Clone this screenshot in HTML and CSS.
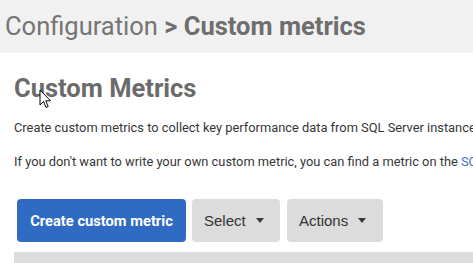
FILE: index.html
```html
<!DOCTYPE html>
<html lang="en">
<head>
  <meta charset="UTF-8" />
  <title>Custom metrics</title>
  <link rel="stylesheet" href="styles.css">
</head>
<body>
  <div class="page-header">
    Configuration <b>&gt; Custom metrics</b>
  </div>

  <div class="content">
    <h1>Custom Metrics</h1>
    <p>Create custom metrics to collect key performance data from SQL Server instances.</p>
    <p>If you don't want to write your own custom metric, you can find a metric on the <a href="#">SQL Monitor metrics website</a>.</p>

    <div class="toolbar">
      <button class="btn btn-primary">Create custom metric</button>
      <button class="btn btn-grey btn-select">Select <span class="caret"></span></button>
      <button class="btn btn-grey btn-actions">Actions <span class="caret"></span></button>
    </div>

    <div class="grid-head"></div>
  </div>

  <!-- mouse pointer seen in the screenshot -->
  <svg class="cursor" width="13" height="20" viewBox="0 0 13 20">
    <path d="M1 1 L1 16 L4.5 12.5 L7 18.5 L9.2 17.5 L6.8 11.8 L11.5 11.8 Z" fill="#fff" stroke="#000" stroke-width="1"/>
  </svg>
</body>
</html>
```

FILE: styles.css
```css
* {
  box-sizing: border-box;
  margin: 0;
  padding: 0;
}

body {
  font-family: Roboto, 'Liberation Sans', sans-serif;
  background: #fff;
  overflow: hidden;
  white-space: nowrap;
}

.page-header {
  height: 53px;
  background: #f1f1f1;
  padding: 10px 0 0 5px;
  font-size: 25.5px;
  line-height: 32px;
  color: #757575;
}

.page-header b {
  font-weight: bold;
  color: #6e6e6e;
}

.content {
  padding-left: 14px;
}

h1 {
  margin-top: 20px;
  font-size: 25.5px;
  line-height: 30px;
  font-weight: bold;
  color: #6b6b6b;
}

p {
  margin-top: 16px;
  font-size: 12.85px;
  line-height: 18px;
  color: #363636;
}

p a {
  color: #3f72c0;
  text-decoration: none;
}

.toolbar {
  display: flex;
  gap: 6px;
  margin: 28px 0 0 3px;
}

.btn {
  height: 43px;
  border: none;
  border-radius: 4px;
  font-size: 15px;
  cursor: pointer;
  display: flex;
  align-items: center;
}

.btn-primary {
  width: 169px;
  justify-content: center;
  background: #2f6bc3;
  color: #fff;
  font-family: Roboto, sans-serif;
  font-size: 14.7px;
  font-weight: bold;
}

.btn-grey {
  background: #dcdcdc;
  color: #333;
  font-family: 'Liberation Sans', Arial, sans-serif;
  padding-left: 12px;
}

.btn-select {
  width: 88px;
}

.btn-actions {
  width: 96px;
  margin-left: 1px;
}

.caret {
  display: inline-block;
  margin-left: 10px;
  border-left: 4.5px solid transparent;
  border-right: 4.5px solid transparent;
  border-top: 5px solid #3a3a3a;
}

.grid-head {
  height: 12px;
  margin-top: 10px;
  background: #dcdcdc;
}

.cursor {
  position: absolute;
  left: 39px;
  top: 89px;
}
```
